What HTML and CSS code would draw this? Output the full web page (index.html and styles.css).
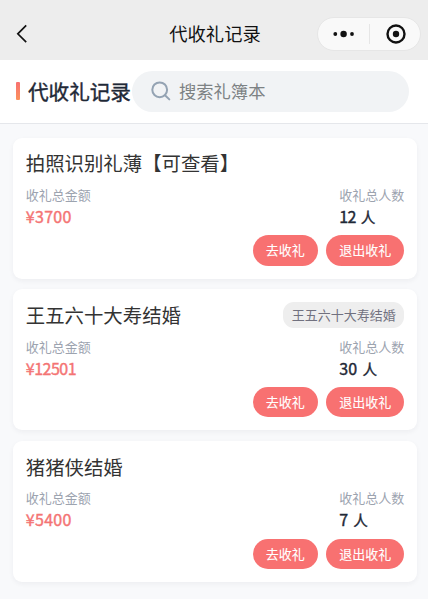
FILE: index.html
```
<!DOCTYPE html>
<html lang="zh-CN">
<head>
<meta charset="utf-8">
<title>代收礼记录</title>
<link rel="stylesheet" href="styles.css">
</head>
<body>
<header class="navbar">
  <svg class="back" viewBox="0 0 12 20"><path d="M10.2 1.4 1.8 9.8l8.4 8.4"/></svg>
  <h1 class="nav-title">代收礼记录</h1>
  <div class="capsule">
    <svg class="dots" viewBox="0 0 22 8"><circle cx="2.3" cy="4" r="1.9"/><circle cx="10.6" cy="4" r="3.2"/><circle cx="19" cy="4" r="1.9"/></svg>
    <span class="divider"></span>
    <svg class="target" viewBox="0 0 20 20"><circle class="ring" cx="10" cy="10" r="8.5"/><circle cx="10" cy="10" r="3.2"/></svg>
  </div>
</header>
<section class="toolbar">
  <span class="accent"></span>
  <h2 class="heading">代收礼记录</h2>
  <div class="search">
    <svg class="glass" viewBox="0 0 20 20"><circle cx="8.7" cy="8.8" r="7.4"/><path d="m14 14.2 4.3 4.2"/></svg>
    <span>搜索礼簿本</span>
  </div>
</section>
<main class="list">
  <article class="card">
    <div class="card-head"><h3 class="title">拍照识别礼薄【可查看】</h3></div>
    <div class="stats">
      <div><p class="label">收礼总金额</p><p class="value money">¥3700</p></div>
      <div><p class="label">收礼总人数</p><p class="value"><span class="narrow">12</span> <span class="unit">人</span></p></div>
    </div>
    <div class="actions"><button class="btn">去收礼</button><button class="btn">退出收礼</button></div>
  </article>
  <article class="card">
    <div class="card-head"><h3 class="title">王五六十大寿结婚</h3><span class="tag">王五六十大寿结婚</span></div>
    <div class="stats">
      <div><p class="label">收礼总金额</p><p class="value money"><span class="narrow">¥12501</span></p></div>
      <div><p class="label">收礼总人数</p><p class="value">30 <span class="unit">人</span></p></div>
    </div>
    <div class="actions"><button class="btn">去收礼</button><button class="btn">退出收礼</button></div>
  </article>
  <article class="card">
    <div class="card-head"><h3 class="title">猪猪侠结婚</h3></div>
    <div class="stats">
      <div><p class="label">收礼总金额</p><p class="value money">¥5400</p></div>
      <div><p class="label">收礼总人数</p><p class="value">7 <span class="unit">人</span></p></div>
    </div>
    <div class="actions"><button class="btn">去收礼</button><button class="btn">退出收礼</button></div>
  </article>
</main>
</body>
</html>
```
FILE: styles.css
```
* { box-sizing: border-box; margin: 0; padding: 0; }
body {
  height: 599px;
  overflow: hidden;
  background: #f8f9fb;
  font-family: "Noto Sans CJK SC", sans-serif;
  color: #333;
}
svg { display: block; flex: none; }

.navbar {
  display: grid;
  grid-template-columns: 1fr auto 1fr;
  align-items: center;
  height: 60px;
  padding: 8px 7px 0 16px;
  background: #ededed;
}
.back { width: 12px; height: 20px; fill: none; stroke: #111; stroke-width: 1.7; }
.nav-title { margin: -2px 7px 0 0; font-size: 18.3px; line-height: 26px; font-weight: 400; color: #111; }
.capsule {
  justify-self: end;
  display: flex;
  align-items: center;
  width: 104px;
  height: 34px;
  padding-left: 15px;
  border: 1px solid #e6e6e6;
  border-radius: 17px;
  background: #f9f9f9;
}
.dots { width: 22px; height: 8px; fill: #111; }
.divider { width: 1px; height: 20px; margin: 0 16px 0 14px; background: #e6e6e6; }
.target { width: 20px; height: 20px; fill: #111; }
.ring { fill: none; stroke: #111; stroke-width: 2.4; }

.toolbar {
  display: flex;
  align-items: center;
  height: 64px;
  padding: 0 19px 1px 16px;
  border-bottom: 1px solid #e5e7eb;
  background: #fff;
}
.accent { width: 4px; height: 18px; border-radius: 1px; background: linear-gradient(#f87171, #fb925c); }
.heading { margin: -1px 0 0 8px; width: 104px; white-space: nowrap; font-size: 20.6px; line-height: 30px; font-weight: 400; -webkit-text-stroke: .4px; color: #1f2937; }
.search {
  display: flex;
  flex: 1;
  align-items: center;
  gap: 8.5px;
  height: 41px;
  padding-left: 18.5px;
  border-radius: 21px;
  background: #f1f3f5;
  font-size: 17.3px;
  line-height: 26px;
  color: #7d8284;
}
.glass { width: 20px; height: 20px; fill: none; stroke: #94a3b3; stroke-width: 2; stroke-linecap: round; }

.list { display: flex; flex-direction: column; gap: 10.8px; padding: 13.6px 10.8px 0 12.8px; }
.card {
  height: 141px;
  padding: 12.5px 13px 0;
  border-radius: 9px;
  background: #fff;
  box-shadow: 0 2px 5px rgba(30, 40, 60, .05);
}
.card-head { display: flex; align-items: center; justify-content: space-between; height: 26px; }
.title { font-size: 19.4px; line-height: 26px; font-weight: 400; color: #333; white-space: nowrap; }
.tag { height: 26px; padding: 0 8.5px; border-radius: 11px; background: #eee; font-size: 13px; line-height: 25px; color: #71717f; white-space: nowrap; }
.stats { display: flex; justify-content: space-between; margin-top: 8.7px; }
.label { font-size: 13px; line-height: 19px; color: #9ca3af; }
.value { height: 22px; margin-top: 1px; font-size: 16px; line-height: 22px; font-weight: 400; -webkit-text-stroke: .4px; letter-spacing: .3px; color: #1f2937; }
.narrow { letter-spacing: -.5px; }
.unit { margin-left: 1px; font-size: 14.5px; line-height: 1; }
.money { color: #f47474; }
.actions { display: flex; justify-content: flex-end; gap: 8.5px; margin-top: 8.3px; }
.btn {
  height: 30.5px;
  padding: 0 13px 1px;
  border: 0;
  border-radius: 16px;
  background: #f87171;
  font: 400 13px/29px "Noto Sans CJK SC", sans-serif;
  -webkit-text-stroke: .1px;
  color: #fff;
  white-space: nowrap;
}
```
